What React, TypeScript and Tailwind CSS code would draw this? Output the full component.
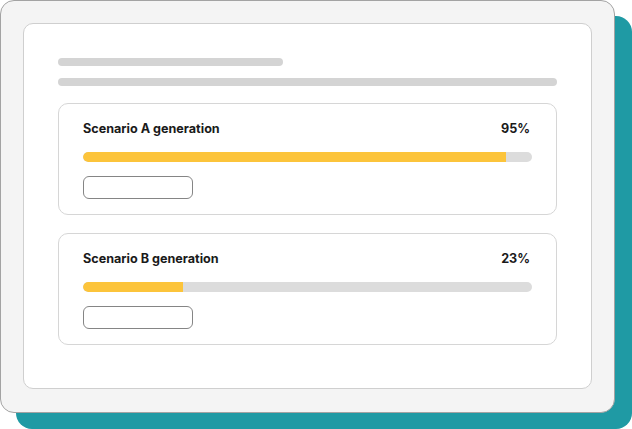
import React from "react";

function ScenarioCard({ title, pct, fill }: { title: string; pct: number; fill: number }) {
  return (
    <div className="rounded-[10px] border border-[#d6d6d6] bg-white px-[24px] pt-[17px] pb-[15px]">
      <div className="flex h-[16px] items-center justify-between pr-[2px] text-[12.6px] font-bold text-[#1a1a1a]">
        <span>{title}</span>
        <span>{pct}%</span>
      </div>
      <div className="mt-[15px] h-[10px] w-full overflow-hidden rounded-full bg-[#dcdcdc]">
        <div className="h-full rounded-l-full bg-[#fcc43b]" style={{ width: `${fill}%` }} />
      </div>
      <div className="mt-[14px] h-[23px] w-[110px] rounded-[6px] border border-[#858585] bg-white" />
    </div>
  );
}

export default function App() {
  return (
    <div
      className="relative h-[429px] w-[632px] overflow-hidden bg-white"
      style={{ fontFamily: "Inter, 'Noto Sans', sans-serif" }}
    >
      <div className="absolute left-[16px] top-[16px] right-0 bottom-0 rounded-[16px] bg-[#1f9aa4]" />
      <div className="relative h-[413px] w-[615px] rounded-[14px] border border-[#a3a3a3] bg-[#f4f4f4] p-[22px]">
        <div className="flex h-[366px] flex-col rounded-[10px] border border-[#cfcfcf] bg-white px-[34px] pt-[34px]">
          <div className="h-[8px] w-[225px] rounded-full bg-[#d4d4d4]" />
          <div className="mt-[12px] h-[8px] w-full rounded-full bg-[#d4d4d4]" />
          <div className="mt-[17px] flex flex-col gap-[18px]">
            <ScenarioCard title="Scenario A generation" pct={95} fill={94.2} />
            <ScenarioCard title="Scenario B generation" pct={23} fill={22.2} />
          </div>
        </div>
      </div>
    </div>
  );
}
